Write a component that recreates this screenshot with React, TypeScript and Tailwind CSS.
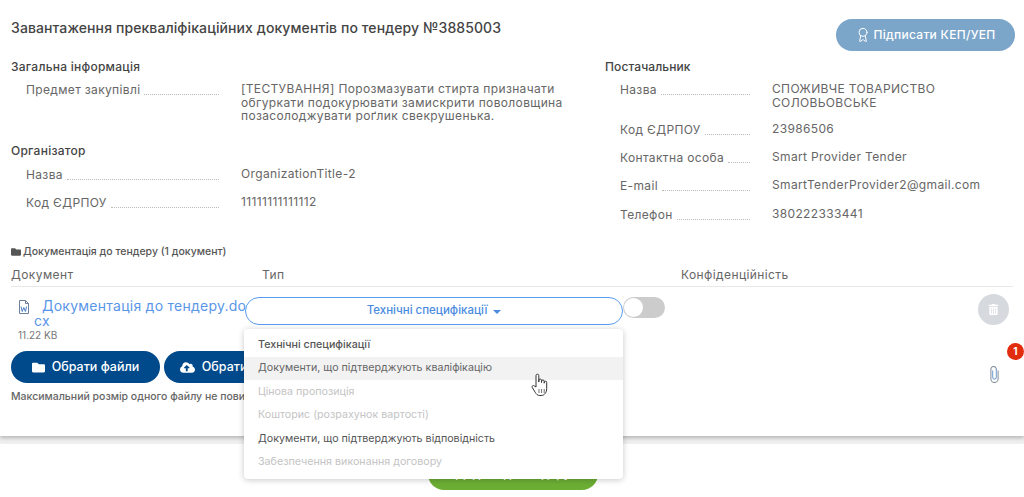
import { Award } from "lucide-react";
import { FaCloudUploadAlt, FaFolder, FaTrashAlt } from "react-icons/fa";

const DROPDOWN = [
  { label: "Технічні специфікації", tone: "text-[#555] font-medium" },
  { label: "Документи, що підтверджують кваліфікацію", tone: "text-[#666] bg-[#f2f2f2]" },
  { label: "Цінова пропозиція", tone: "text-[#c4c4c4]" },
  { label: "Кошторис (розрахунок вартості)", tone: "text-[#c4c4c4]" },
  { label: "Документи, що підтверджують відповідність", tone: "text-[#555]" },
  { label: "Забезпечення виконання договору", tone: "text-[#c4c4c4]" },
];

function InfoRow({ label, value, labelWidth, height }: { label: string; value: string; labelWidth: string; height: string }) {
  return (
    <div className={`flex ${height}`}>
      <div className={`flex ${labelWidth} shrink-0 items-start`}>
        <span className="mt-[2px] text-[12px] leading-[14px] tracking-[0.35px] text-[#666]">{label}</span>
        <span className="mt-[13px] mr-[22px] ml-[4px] flex-1 border-b border-dotted border-[#bbb]" />
      </div>
      <p className="mt-[1px] w-[330px] text-[12px] leading-[13.5px] tracking-[0.35px] text-[#666]">{value}</p>
    </div>
  );
}

function WordIcon() {
  return (
    <svg viewBox="0 0 12 14" className="h-[14px] w-[12px] shrink-0" fill="none" stroke="#6d7f9c" strokeWidth="1">
      <path d="M1.5.5h6l3 3v10h-9z" />
      <path d="M7.5.5v3h3" />
      <path d="M3 6.5l1.2 5 1.6-4 1.6 4 1.2-5" stroke="#4a7fc0" />
    </svg>
  );
}

function PaperClip() {
  return (
    <svg viewBox="0 0 10 18" className="h-[17px] w-[9px]" fill="none" strokeWidth="1.1" strokeLinecap="round" preserveAspectRatio="none">
      <path d="M9 5v8.5a4 4 0 0 1-8 0V3.5a3 3 0 0 1 6 0" stroke="#7f8b99" />
      <path d="M7 3.5V12a2 2 0 0 1-4 0V5" stroke="#6b9bd0" />
    </svg>
  );
}

function HandCursor() {
  return (
    <svg viewBox="0 0 18 25" className="h-[25px] w-[18px]" fill="#fff" stroke="#333" strokeWidth="1" strokeLinejoin="round">
      <path d="M5 14V2.6a1.4 1.4 0 0 1 2.8 0V9l.1-1.6a1.3 1.3 0 0 1 2.6 0V9.5l.1-1.2a1.3 1.3 0 0 1 2.6 0v1.9l.1-.8a1.2 1.2 0 0 1 2.4 0v6.3c0 3.5-2 6.8-5.6 6.8H8.8c-2.4 0-3.6-1.5-4.6-3.2L1.3 14.6c-.8-1.5 1-2.7 2.1-1.6z" />
      <path d="M8 16v4M10.6 16v4M13.2 16v4" strokeWidth=".7" />
    </svg>
  );
}

export default function App() {
  return (
    <div className="flex h-[497px] w-[1024px] flex-col overflow-hidden bg-white font-['Inter',sans-serif]">
      <main className="relative z-10 h-[436px] shrink-0 bg-white px-[11px] shadow-[0_2px_4px_rgba(0,0,0,0.25)]">
        <header className="flex h-[59px] items-start justify-between pt-[19px]">
          <h1 className="text-[14px] leading-[18px] font-medium tracking-[0.1px] text-[#444]">
            Завантаження преквалiфікаційних документів по тендеру №3885003
          </h1>
          <button className="-mr-[2px] flex h-[32px] w-[179px] items-center justify-center gap-[2px] rounded-full bg-[#7ba5c9] text-[12px] font-medium tracking-[0.3px] text-white">
            <Award size={16} strokeWidth={1.5} />
            Підписати КЕП/УЕП
          </button>
        </header>

        <section className="flex h-[186px]">
          <div className="w-[594px] shrink-0">
            <h2 className="text-[12px] leading-[15px] font-medium tracking-[0.25px] text-[#444]">Загальна інформація</h2>
            <div className="mt-[7px] ml-[15px]">
              <InfoRow
                label="Предмет закупівлі"
                labelWidth="w-[215px]"
                height="h-[62px]"
                value="[ТЕСТУВАННЯ] Порозмазувати стирта призначати обгуркати подокурювати замискрити поволовщина позасолоджувати роґлик свекрушенька."
              />
            </div>
            <h2 className="text-[12px] leading-[15px] font-medium tracking-[0.25px] text-[#444]">Організатор</h2>
            <div className="mt-[8px] ml-[15px]">
              <InfoRow label="Назва" labelWidth="w-[215px]" height="h-[28px]" value="OrganizationTitle-2" />
              <InfoRow label="Код ЄДРПОУ" labelWidth="w-[215px]" height="h-[28px]" value="11111111111112" />
            </div>
          </div>
          <div className="min-w-0 flex-1">
            <h2 className="text-[12px] leading-[15px] font-medium tracking-[0.1px] text-[#444]">Постачальник</h2>
            <div className="mt-[7px] ml-[15px]">
              <InfoRow label="Назва" labelWidth="w-[152px]" height="h-[40px]" value="СПОЖИВЧЕ ТОВАРИСТВО СОЛОВЬОВСЬКЕ" />
              <InfoRow label="Код ЄДРПОУ" labelWidth="w-[152px]" height="h-[28px]" value="23986506" />
              <InfoRow label="Контактна особа" labelWidth="w-[152px]" height="h-[28px]" value="Smart Provider Tender" />
              <InfoRow label="E-mail" labelWidth="w-[152px]" height="h-[29px]" value="SmartTenderProvider2@gmail.com" />
              <InfoRow label="Телефон" labelWidth="w-[152px]" height="h-[28px]" value="380222333441" />
            </div>
          </div>
        </section>

        <p className="flex h-[14px] items-center gap-[2px] text-[10.5px] font-medium text-[#555]">
          <FaFolder size={10} className="text-[#555]" />
          Документація до тендеру (1 документ)
        </p>
        <div className="mt-[8px] flex h-[20px] border-b border-[#e8e8e8] text-[12px] leading-[15px] tracking-[0.4px] text-[#666]">
          <span className="w-[251px]">Документ</span>
          <span className="w-[419px]">Тип</span>
          <span>Конфіденційність</span>
        </div>

        <div className="mt-[10px] flex h-[44px] items-start">
          <div className="w-[234px] shrink-0 pl-[7px]">
            <div className="flex items-start">
              <span className="mt-[3px]">
                <WordIcon />
              </span>
              <a className="mt-[1px] ml-[4px] w-[215px] shrink-0 text-[14px] leading-[15px] tracking-[0.25px] break-all text-[#5a96e8] [text-indent:8px]">
                Документація до тендеру.docx
              </a>
            </div>
            <p className="mt-[1px] text-[10px] leading-[12px] text-[#777]">11.22 KB</p>
          </div>

          <div className="relative z-20 w-[378px] shrink-0">
            <button className="flex h-[28px] w-full items-center justify-center gap-[6px] rounded-full border border-[#5a9cf0] text-[11.5px] font-medium text-[#4a8be0]">
              Технічні специфікації
              <span className="mt-[1px] border-x-[4px] border-t-[4px] border-x-transparent border-t-[#4a8be0]" />
            </button>
            <ul className="absolute top-[32px] -left-[1px] w-[379px] rounded-[4px] bg-white pt-[4px] pb-[5px] shadow-[0_1px_6px_rgba(0,0,0,0.22)]">
              {DROPDOWN.map((item) => (
                <li key={item.label} className={`flex h-[23.5px] items-center px-[14px] text-[10.7px] ${item.tone}`}>
                  {item.label}
                </li>
              ))}
            </ul>
            <span className="absolute top-[76px] left-[286px]">
              <HandCursor />
            </span>
          </div>

          <div className="flex h-[21px] w-[42px] shrink-0 items-center rounded-full bg-[#cccccc] px-[1px]">
            <span className="h-[19px] w-[19px] rounded-full bg-white" />
          </div>

          <div className="mr-[4px] -mt-[3px] ml-auto flex h-[31px] w-[31px] items-center justify-center rounded-full bg-[#d6dade] text-white">
            <FaTrashAlt size={11} />
          </div>
        </div>

        <div className="mt-[10px] flex h-[32px] gap-[4px]">
          <button className="flex w-[149px] items-center justify-center gap-[7px] rounded-full bg-[#004a8c] text-[12.5px] font-medium text-white">
            <FaFolder size={13} />
            Обрати файли
          </button>
          <button className="flex w-[149px] items-center justify-center gap-[7px] rounded-full bg-[#004a8c] text-[12.5px] font-medium text-white">
            <FaCloudUploadAlt size={15} />
            Обрати з диска
          </button>
          <div className="relative mt-[15px] mr-[14px] ml-auto h-[17px]">
            <PaperClip />
            <span className="absolute -top-[23px] left-[17px] flex h-[17px] w-[17px] items-center justify-center rounded-full bg-[#e12c0e] text-[10px] font-bold text-white">
              1
            </span>
          </div>
        </div>

        <p className="mt-[8px] text-[10.5px] leading-[12px] font-medium text-[#666]">
          Максимальний розмір одного файлу не повинен перевищувати 50 МБ
        </p>
      </main>

      <div className="h-[8px] shrink-0 bg-[#f0f0f0]" />

      <footer className="flex flex-1 justify-center pt-[14px] pl-[2px]">
        <button className="h-[32px] w-[170px] rounded-full bg-[#6cae34] text-[12px] font-medium text-white">
          Додати до тендеру
        </button>
      </footer>
    </div>
  );
}
